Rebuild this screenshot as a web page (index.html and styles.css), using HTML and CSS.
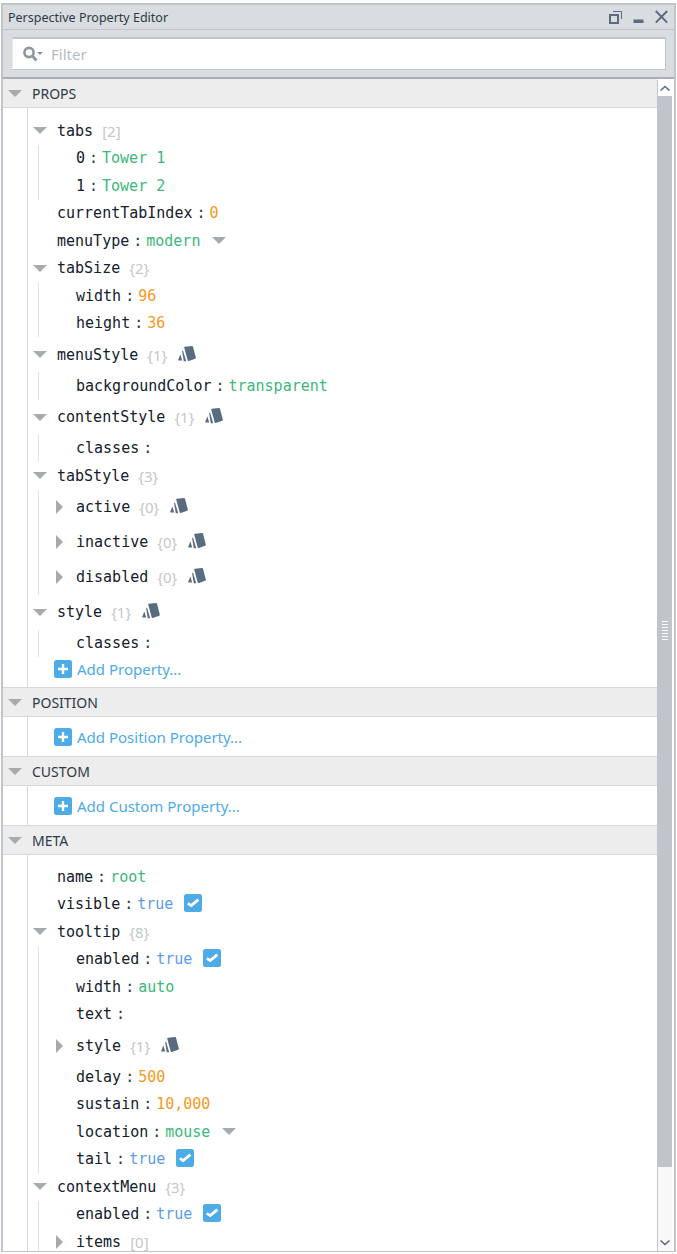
FILE: index.html
```html
<!DOCTYPE html>
<html lang="en">
<head>
<meta charset="utf-8">
<title>Perspective Property Editor</title>
<link rel="stylesheet" href="styles.css">
</head>
<body>
<svg class="defs" width="0" height="0" aria-hidden="true">
  <symbol id="swatch" viewBox="0 0 18 16">
    <path d="M6.9 0.7 L14 0 Q14.8 0 15 0.8 L17.8 11.6 Q18 12.4 17.2 12.7 L10.8 15 Q10 15.2 9.7 14.4 L6.2 1.6 Q6 0.8 6.9 0.7 Z" fill="#5a6c80"/>
    <path d="M4.1 5.2 L5 4.6 L8.2 15.2 L5.8 15.2 Z" fill="#5a6c80"/>
    <path d="M2.4 8.4 L4.2 14.6 L0.6 14.6 Q0 14.4 0.3 13.6 Z" fill="#5a6c80"/>
  </symbol>
  <symbol id="check" viewBox="0 0 18 18">
    <rect width="18" height="18" rx="2.5" fill="#4dabe8"/>
    <path d="M3.8 9.4 L7.2 11.6 L14.4 5.6" fill="none" stroke="#fff" stroke-width="2.8"/>
  </symbol>
  <symbol id="plus" viewBox="0 0 18 18">
    <rect width="18" height="18" rx="2.5" fill="#4dabe8"/>
    <path d="M9 4 V14 M4 9 H14" fill="none" stroke="#fff" stroke-width="2.4"/>
  </symbol>
</svg>
<div class="window">
  <header class="titlebar">
    <span class="title">Perspective Property Editor</span>
    <span class="win-icons">
      <svg width="13" height="14" viewBox="0 0 13 14"><path d="M4 1.5 H12.5 V9" fill="none" stroke="#5a6c80"/><rect x="1" y="5" width="8" height="8" fill="none" stroke="#5a6c80" stroke-width="2"/></svg>
      <svg width="11" height="14" viewBox="0 0 11 14"><rect x="0.5" y="9.5" width="10" height="3.5" fill="#5a6c80"/></svg>
      <svg width="13" height="14" viewBox="0 0 13 14"><path d="M0.8 1 L12.2 12.6 M12.2 1 L0.8 12.6" stroke="#5a6c80" stroke-width="2" fill="none"/></svg>
    </span>
  </header>
  <div class="filterbar">
    <div class="filter">
      <svg width="21" height="16" viewBox="0 0 21 16"><circle cx="7" cy="6.5" r="4.6" fill="none" stroke="#8d979e" stroke-width="2.6"/><path d="M10.5 10 L14.5 14.5" stroke="#8d979e" stroke-width="2.8"/><path d="M15 6 H21 L18 9 Z" fill="#8d979e"/></svg>
      <span class="filter-text">Filter</span>
    </div>
  </div>
  <div class="pane">
    <main class="content">
      <section>
        <h2 class="sec-head"><i class="caret down"></i>PROPS</h2>
        <div class="tree props-tree">
          <div class="row"><span class="slot"><i class="caret down"></i></span><span class="key">tabs</span><span class="meta">[2]</span></div>
          <div class="group">
            <div class="row"><span class="slot"></span><span class="key">0</span><span class="colon">:</span><span class="str">Tower 1</span></div>
            <div class="row"><span class="slot"></span><span class="key">1</span><span class="colon">:</span><span class="str">Tower 2</span></div>
          </div>
          <div class="row"><span class="slot"></span><span class="key">currentTabIndex</span><span class="colon">:</span><span class="num">0</span></div>
          <div class="row"><span class="slot"></span><span class="key">menuType</span><span class="colon">:</span><span class="str">modern</span><i class="caret down after"></i></div>
          <div class="row"><span class="slot"><i class="caret down"></i></span><span class="key">tabSize</span><span class="meta">{2}</span></div>
          <div class="group">
            <div class="row"><span class="slot"></span><span class="key">width</span><span class="colon">:</span><span class="num">96</span></div>
            <div class="row"><span class="slot"></span><span class="key">height</span><span class="colon">:</span><span class="num">36</span></div>
          </div>
          <div class="row tall"><span class="slot"><i class="caret down"></i></span><span class="key">menuStyle</span><span class="meta">{1}</span><svg class="swatch"><use href="#swatch"/></svg></div>
          <div class="group">
            <div class="row"><span class="slot"></span><span class="key">backgroundColor</span><span class="colon">:</span><span class="str">transparent</span></div>
          </div>
          <div class="row tall"><span class="slot"><i class="caret down"></i></span><span class="key">contentStyle</span><span class="meta">{1}</span><svg class="swatch"><use href="#swatch"/></svg></div>
          <div class="group">
            <div class="row"><span class="slot"></span><span class="key">classes</span><span class="colon">:</span></div>
          </div>
          <div class="row"><span class="slot"><i class="caret down"></i></span><span class="key">tabStyle</span><span class="meta">{3}</span></div>
          <div class="group">
            <div class="row tall"><span class="slot"><i class="caret right"></i></span><span class="key">active</span><span class="meta">{0}</span><svg class="swatch"><use href="#swatch"/></svg></div>
            <div class="row tall"><span class="slot"><i class="caret right"></i></span><span class="key">inactive</span><span class="meta">{0}</span><svg class="swatch"><use href="#swatch"/></svg></div>
            <div class="row tall"><span class="slot"><i class="caret right"></i></span><span class="key">disabled</span><span class="meta">{0}</span><svg class="swatch"><use href="#swatch"/></svg></div>
          </div>
          <div class="row tall"><span class="slot"><i class="caret down"></i></span><span class="key">style</span><span class="meta">{1}</span><svg class="swatch"><use href="#swatch"/></svg></div>
          <div class="group">
            <div class="row"><span class="slot"></span><span class="key">classes</span><span class="colon">:</span></div>
          </div>
          <div class="add pulled"><svg class="plus"><use href="#plus"/></svg>Add Property...</div>
        </div>
      </section>
      <section>
        <h2 class="sec-head"><i class="caret down"></i>POSITION</h2>
        <div class="tree short"><div class="add"><svg class="plus"><use href="#plus"/></svg>Add Position Property...</div></div>
      </section>
      <section>
        <h2 class="sec-head"><i class="caret down"></i>CUSTOM</h2>
        <div class="tree short"><div class="add"><svg class="plus"><use href="#plus"/></svg>Add Custom Property...</div></div>
      </section>
      <section>
        <h2 class="sec-head"><i class="caret down"></i>META</h2>
        <div class="tree">
          <div class="row"><span class="slot"></span><span class="key">name</span><span class="colon">:</span><span class="str">root</span></div>
          <div class="row"><span class="slot"></span><span class="key">visible</span><span class="colon">:</span><span class="bool">true</span><svg class="check"><use href="#check"/></svg></div>
          <div class="row"><span class="slot"><i class="caret down"></i></span><span class="key">tooltip</span><span class="meta">{8}</span></div>
          <div class="group">
            <div class="row"><span class="slot"></span><span class="key">enabled</span><span class="colon">:</span><span class="bool">true</span><svg class="check"><use href="#check"/></svg></div>
            <div class="row"><span class="slot"></span><span class="key">width</span><span class="colon">:</span><span class="str">auto</span></div>
            <div class="row"><span class="slot"></span><span class="key">text</span><span class="colon">:</span></div>
            <div class="row tall"><span class="slot"><i class="caret right"></i></span><span class="key">style</span><span class="meta">{1}</span><svg class="swatch"><use href="#swatch"/></svg></div>
            <div class="row"><span class="slot"></span><span class="key">delay</span><span class="colon">:</span><span class="num">500</span></div>
            <div class="row"><span class="slot"></span><span class="key">sustain</span><span class="colon">:</span><span class="num">10,000</span></div>
            <div class="row"><span class="slot"></span><span class="key">location</span><span class="colon">:</span><span class="str">mouse</span><i class="caret down after"></i></div>
            <div class="row"><span class="slot"></span><span class="key">tail</span><span class="colon">:</span><span class="bool">true</span><svg class="check"><use href="#check"/></svg></div>
          </div>
          <div class="row"><span class="slot"><i class="caret down"></i></span><span class="key">contextMenu</span><span class="meta">{3}</span></div>
          <div class="group">
            <div class="row"><span class="slot"></span><span class="key">enabled</span><span class="colon">:</span><span class="bool">true</span><svg class="check"><use href="#check"/></svg></div>
            <div class="row"><span class="slot"><i class="caret right"></i></span><span class="key">items</span><span class="meta">[0]</span></div>
          </div>
        </div>
      </section>
    </main>
    <aside class="scrollbar">
      <div class="sb-btn"><svg width="12" height="8" viewBox="0 0 12 8"><path d="M1.5 6.5 L6 2.5 L10.5 6.5" fill="none" stroke="#5a6c80" stroke-width="1.6"/></svg></div>
      <div class="thumb"><span class="grip"></span></div>
      <div class="track"></div>
      <div class="sb-btn end"><svg width="12" height="8" viewBox="0 0 12 8"><path d="M1.5 1.5 L6 5.5 L10.5 1.5" fill="none" stroke="#5a6c80" stroke-width="1.6"/></svg></div>
    </aside>
  </div>
</div>
</body>
</html>
```

FILE: styles.css
```css
* { box-sizing: border-box; }
html, body { margin: 0; padding: 0; background: #fff; }
body { width: 677px; height: 1254px; overflow: hidden; padding: 3px 1px 2px 1px; font-family: "Noto Sans", sans-serif; }
.defs { position: absolute; }
.window { height: 1249px; border: 2px solid #bfc5ca; border-bottom-width: 1px; background: #d9dde0; display: flex; flex-direction: column; overflow: hidden; }
.titlebar { height: 24px; flex: none; display: flex; align-items: center; justify-content: space-between; padding: 0 6px 0 5px; border-bottom: 1px solid #bfc5ca; box-sizing: content-box; }
.title { font-size: 12.5px; color: #2c3a48; white-space: nowrap; }
.win-icons { display: flex; align-items: center; gap: 11px; }
.filterbar { height: 49px; flex: none; padding: 7px 8px 0 9px; border-bottom: 2px solid #a9b0b5; }
.filter { height: 33px; background: #fff; border: 1px solid #bfc5ca; border-top-width: 2px; border-left-color: #e4e7e9; display: flex; align-items: center; padding-left: 9px; gap: 8px; }
.filter-text { font-size: 15px; color: #b4bcc2; }
.pane { flex: 1; min-height: 0; display: flex; background: #fff; }
.content { flex: 1; min-width: 0; overflow: hidden; }
.sec-head { margin: 0; height: 29px; padding: 1px 0 0 5px; background: #ededed; border-bottom: 1px solid #d6d9db; display: flex; align-items: center; font-size: 14px; font-weight: 400; color: #2c3a48; }
.sec-head .caret { margin-right: 10px; }
.tree { margin-left: 24px; border-left: 1px solid #d6d9db; padding: 8px 0 4px 0; }
.tree.props-tree { padding: 9px 0 4.5px 0; }
section { border-bottom: 1px solid #d6d9db; }
section:last-child { border-bottom: 0; }
.tree.short { padding: 6px 0; }
.row { height: 27.5px; display: flex; align-items: center; font-family: "DejaVu Sans Mono", monospace; font-size: 15px; line-height: 16px; white-space: nowrap; }
.row.tall { height: 35px; }
.slot { width: 29px; flex: none; display: flex; justify-content: flex-end; padding-right: 10px; }
.group { margin-left: 10px; border-left: 1px solid #e2e4e6; }
.group .slot { width: 37px; padding-right: 13px; }
.key { color: #14202c; }
.colon { width: 17px; text-align: center; color: #2c3a48; flex: none; }
.str { color: #3cb878; }
.num { color: #f59a23; }
.bool { color: #5b9bf0; }
.meta { font-family: "Noto Sans", sans-serif; font-size: 15px; line-height: 14px; color: #c4c8cb; margin-left: 9px; }
.caret { display: inline-block; width: 0; height: 0; flex: none; }
.caret.down { border-left: 7px solid transparent; border-right: 7px solid transparent; border-top: 7px solid #a6abaf; }
.caret.right { border-top: 7px solid transparent; border-bottom: 7px solid transparent; border-left: 7px solid #a6abaf; }
.caret.after { margin-left: 12px; }
.swatch { width: 18px; height: 16px; margin-left: 11px; margin-top: -2px; flex: none; }
.check { width: 18px; height: 18px; margin-left: 11px; margin-top: -2px; flex: none; }
.add { height: 27px; display: flex; align-items: center; padding-left: 26px; font-size: 15px; color: #4dabe8; white-space: nowrap; }
.add.pulled { margin-top: -1.5px; }
.plus { width: 18px; height: 18px; margin-right: 5px; flex: none; }
.scrollbar { width: 15px; flex: none; margin-right: 2px; margin-top: 1px; background: #f8f8f8; border-left: 1px solid #bfc5ca; display: flex; flex-direction: column; }
.sb-btn { height: 16px; flex: none; display: flex; align-items: center; justify-content: center; background: #fff; }
.sb-btn.end { background: #f8f8f8; height: 17px; }
.thumb { height: 1071px; flex: none; background: #bfc5ca; display: flex; align-items: center; justify-content: center; }
.grip { width: 6px; height: 21px; background: repeating-linear-gradient(#fff 0 1px, #bfc5ca 1px 3px); }
.track { flex: 1; }
```
